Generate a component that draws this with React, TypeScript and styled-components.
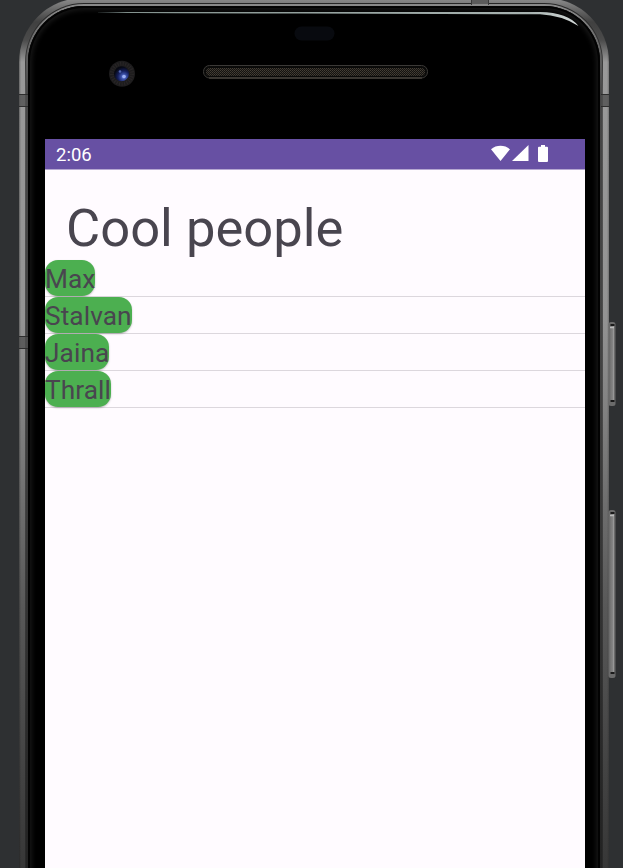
import React from "react";
import styled, { createGlobalStyle } from "styled-components";

const GlobalStyle = createGlobalStyle`
  * { box-sizing: border-box; }
  body { margin: 0; background: #2e3032; overflow: hidden; }
`;

const Stage = styled.main`
  position: relative;
  width: 623px;
  height: 868px;
  overflow: hidden;
  background: #2e3032;
  font-family: Roboto, "Noto Sans", sans-serif;
  color: #49454f;
`;

const Shell = styled.div`
  width: 590px;
  height: 960px;
  margin: -2px 0 0 19px;
  padding: 5px 6px 0 6px;
  border-radius: 64px 64px 0 0;
  background: linear-gradient(90deg, rgba(20, 20, 20, 0.4) 0, transparent 2px, transparent 588px, rgba(30, 30, 30, 0.3) 590px),
    linear-gradient(180deg, #8e8e8e 0, #777 7px, #404040 24px, #4b4b4b 42px, #999 64px, #939393 320px, #787878 460px, #585858 610px, #424242 780px, #363636 880px);
`;

const Rim = styled.div`
  height: 100%;
  padding: 1px 1px 0;
  border-radius: 59px 59px 0 0;
  background: linear-gradient(180deg, #262626 0, #333 50px, #555 90px, #4a4a4a 400px, #292929 800px);
`;

const Bevel = styled.div`
  height: 100%;
  padding: 2px 2px 0;
  border-radius: 58px 58px 0 0;
  background: linear-gradient(180deg, #8a8a8a 0, #606060 50px, #464646 90px, #434343 350px, #383838 520px, #262626 790px, #222 870px);
`;

const Glass = styled.div`
  height: 100%;
  padding: 0 17px;
  border-radius: 56px 56px 0 0;
  background: #000;
  box-shadow: inset 0 0 0 2px #030303, inset 0 0 5px 4px #171717;
`;

const Forehead = styled.header`
  height: 133px;
`;

const Screen = styled.section`
  width: 540px;
  height: 800px;
  background: #fffbff;
`;

const StatusBar = styled.div`
  height: 31px;
  padding: 0 37px 0 11px;
  display: flex;
  align-items: center;
  justify-content: space-between;
  background: #6750a3;
  border-bottom: 1px solid #b5a8d1;
  color: #fff;
`;

const Clock = styled.time`
  padding-top: 1px;
  font-size: 18.5px;
  line-height: 30px;
`;

const StatusIcons = styled.svg`
  width: 60px;
  height: 20px;
`;

const Title = styled.h1`
  margin: 0;
  padding: 27px 0 0 21px;
  height: 90px;
  font-size: 52.5px;
  font-weight: 400;
  line-height: 62px;
  letter-spacing: 0.02px;
`;

const People = styled.ul`
  margin: 0;
  padding: 0;
  list-style: none;
`;

const Person = styled.li`
  height: 37px;
  border-bottom: 1px solid #dcd7dd;
`;

const NamePill = styled.span`
  display: inline-block;
  vertical-align: top;
  height: 36px;
  border-radius: 13px;
  background: #4caf50;
  font-size: 26.25px;
  line-height: 39px;
  letter-spacing: 0.08px;
  white-space: nowrap;
  box-shadow: 0 1px 2px rgba(0, 0, 0, 0.25);
`;

const Hardware = styled.svg`
  position: absolute;
  inset: 0;
  width: 623px;
  height: 868px;
  pointer-events: none;
`;

const people = ["Max", "Stalvan", "Jaina", "Thrall"];

function StatusGlyphs() {
  return (
    <StatusIcons viewBox="0 0 60 20" fill="#fff" aria-label="Wi-Fi, signal, battery">
      <path d="M3 5.3C8.5 .7 16.500 .7 22 5.300L12.500 17Z" />
      <path d="M24 17 40.500 1V17Z" />
      <path d="M53 1h4v1.800h2q1 0 1 1V17q0 1-1 1h-8q-1 0-1-1V3.800q0-1 1-1h2Z" />
    </StatusIcons>
  );
}

function SideButton({ y, height }: { y: number; height: number }) {
  return (
    <g>
      <rect x="608.500" y={y} width="7" height={height} rx="2.500" fill="#6b6b6b" />
      <rect x="610" y={y + 4} width="4" height={height - 8} fill="url(#key)" />
      <path d={`M610.500 ${y + 3}h4M610.500 ${y + height - 5}h4`} stroke="#1a1a1a" strokeWidth="2" />
      <path d={`M610 ${y + 5.500}h4`} stroke="#bbb" strokeWidth="1.500" />
    </g>
  );
}

function AntennaBand({ x, y, width }: { x: number; y: number; width: number }) {
  return (
    <g>
      <rect x={x} y={y} width={width} height="13" fill="#4c4c4c" fillOpacity=".75" />
      <path d={`M${x} ${y + 0.5}h${width}M${x} ${y + 12.5}h${width}`} stroke="#2d2d2d" />
    </g>
  );
}

function PhoneDetails() {
  return (
    <Hardware viewBox="0 0 623 868" aria-hidden="true">
      <defs>
        <linearGradient id="key">
          <stop offset="0" stopColor="#717171" />
          <stop offset=".7" stopColor="#858585" />
          <stop offset="1" stopColor="#a4a4a4" />
        </linearGradient>
        <linearGradient id="shine">
          <stop offset="0" stopColor="#7d9090" stopOpacity="0.2" />
          <stop offset=".06" stopColor="#84938f" />
          <stop offset=".9" stopColor="#a8b3b1" />
          <stop offset="1" stopColor="#d4dad9" />
        </linearGradient>
        <radialGradient id="lens" cx=".65" cy=".7" r=".65">
          <stop offset="0" stopColor="#8098ea" />
          <stop offset=".25" stopColor="#3e54ac" />
          <stop offset=".6" stopColor="#151f5c" />
          <stop offset="1" stopColor="#070913" />
        </radialGradient>
        <pattern id="mesh" width="2" height="2" patternUnits="userSpaceOnUse">
          <rect width="2" height="2" fill="#15130f" />
          <rect width="1" height="1" fill="#443e36" />
          <rect x="1" y="1" width="1" height="1" fill="#393530" />
        </pattern>
      </defs>
      <path d="M98 12H540Q568 12.500 578.500 26 562 15.500 540 14.300L300 13.600Q190 13.400 98 12.800Z" fill="url(#shine)" />
      <rect x="294.500" y="26.500" width="40" height="14" rx="7" fill="#080a0f" />
      <rect x="203.500" y="65.500" width="224" height="12.500" rx="6" fill="#0a0a09" stroke="#3b3936" />
      <rect x="206" y="68" width="219" height="8" rx="4" fill="url(#mesh)" />
      <path d="M209 78H422" stroke="#575149" />
      <circle cx="122" cy="73.800" r="13" fill="#1d1c1d" />
      <circle cx="122" cy="73.800" r="10" fill="none" stroke="#292627" strokeWidth="4" strokeDasharray="1 1.500" />
      <circle cx="121.500" cy="73.800" r="7.500" fill="url(#lens)" />
      <circle cx="124" cy="76.500" r="1.800" fill="#9db0f5" />
      <circle cx="120" cy="71.500" r="1.300" fill="#5064ae" />
      <AntennaBand x={19} y={94} width={9} />
      <AntennaBand x={19} y={336} width={9} />
      <AntennaBand x={601} y={94} width={8} />
      <rect x="471" width="18" height="4" fill="#5c5c5c" />
      <path d="M471.500 0v5M488.500 0v5" stroke="#3a3a3a" />
      <SideButton y={322} height={84} />
      <SideButton y={510} height={168} />
    </Hardware>
  );
}

export default function App() {
  return (
    <>
      <GlobalStyle />
      <Stage>
        <Shell>
          <Rim>
            <Bevel>
              <Glass>
                <Forehead />
                <Screen>
                  <StatusBar>
                    <Clock>2:06</Clock>
                    <StatusGlyphs />
                  </StatusBar>
                  <Title>Cool people</Title>
                  <People>
                    {people.map((name) => (
                      <Person key={name}>
                        <NamePill>{name}</NamePill>
                      </Person>
                    ))}
                  </People>
                </Screen>
              </Glass>
            </Bevel>
          </Rim>
        </Shell>
        <PhoneDetails />
      </Stage>
    </>
  );
}
